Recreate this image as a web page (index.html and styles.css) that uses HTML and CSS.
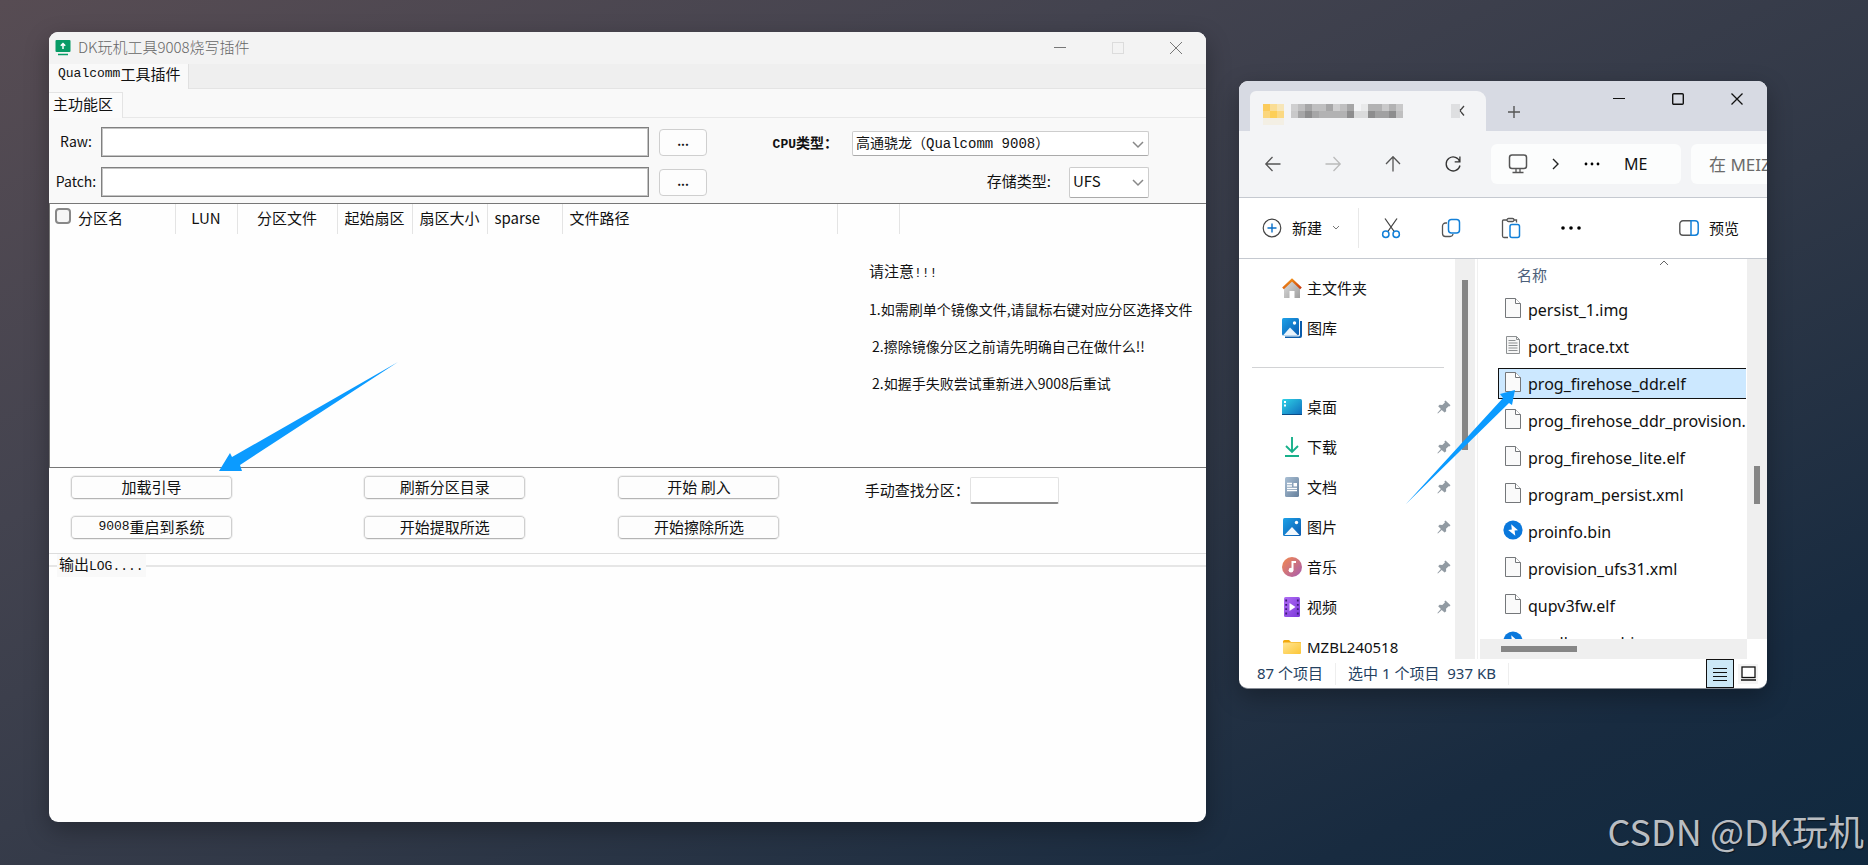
FILE: index.html
```html
<!DOCTYPE html>
<html lang="zh-CN">
<head>
<meta charset="utf-8">
<title>DK玩机工具9008烧写插件</title>
<link rel="stylesheet" href="styles.css">
</head>
<body>
<svg class="defs" width="0" height="0" aria-hidden="true">
  <defs>
    <linearGradient id="g-blue" x1="0" y1="0" x2="1" y2="1"><stop offset="0" stop-color="#1ea2e8"/><stop offset="1" stop-color="#0a5ab0"/></linearGradient>
    <linearGradient id="g-cyan" x1="0" y1="0" x2="1" y2="1"><stop offset="0" stop-color="#2fd3e6"/><stop offset="1" stop-color="#0f6cbd"/></linearGradient>
    <linearGradient id="g-roof" x1="0" y1="0" x2="1" y2="1"><stop offset="0" stop-color="#f9a01b"/><stop offset="1" stop-color="#c9380c"/></linearGradient>
    <linearGradient id="g-wall" x1="0" y1="0" x2="1" y2="1"><stop offset="0" stop-color="#dedede"/><stop offset="1" stop-color="#9f9f9f"/></linearGradient>
    <linearGradient id="g-doc" x1="0" y1="0" x2="1" y2="1"><stop offset="0" stop-color="#a9bfd4"/><stop offset="1" stop-color="#66809c"/></linearGradient>
    <linearGradient id="g-music" x1="0" y1="0" x2="1" y2="1"><stop offset="0" stop-color="#f58a4b"/><stop offset="1" stop-color="#a65bb2"/></linearGradient>
    <linearGradient id="g-video" x1="0" y1="0" x2="1" y2="1"><stop offset="0" stop-color="#b06df5"/><stop offset="1" stop-color="#7a37d8"/></linearGradient>
    <linearGradient id="g-folder" x1="0" y1="0" x2="1" y2="1"><stop offset="0" stop-color="#ffe594"/><stop offset="1" stop-color="#fcc636"/></linearGradient>
    <symbol id="pin" viewBox="0 0 14 14"><path d="M8.5.5 13.5 5.2 12.3 6.4 11.6 6.2 9 8.8 9.2 11.3 7.6 12.6 4.7 9.9.9 13.5.4 13 3.9 9.1 1.2 6.3 2.6 4.8 5.3 5 7.9 2.4 7.4 1.5Z" fill="#929ba3"/></symbol>
    <symbol id="file" viewBox="0 0 16 20"><path d="M.5.5h10l5 5v14H.5Z" fill="#fafafa" stroke="#74777a"/><path d="M10.5.5v5h5" fill="#fff" stroke="#74777a"/></symbol>
    <symbol id="txt" viewBox="0 0 16 20"><path d="M1.5 1.5h10l3 3v14h-13Z" fill="#f6f6f6" stroke="#8d9092"/><path d="M11.5 1.5v3h3" fill="none" stroke="#8d9092"/><path d="M3.5 5.5h7M3.5 8h9M3.5 10.5h9M3.5 13h9M3.5 15.5h9" stroke="#8d9092"/></symbol>
    <symbol id="bolt" viewBox="0 0 20 20"><circle cx="10" cy="10" r="9.6" fill="#0a78dc"/><path d="M8.2 4.2 15 10.2 11.6 10.6 12.3 15.8 5.2 10 8.8 9.4Z" fill="#fff"/></symbol>
  </defs>
</svg>

<main class="desktop">
  <section class="window tool">
    <header class="tool-title">
      <svg width="16" height="16" viewBox="0 0 16 16"><rect x="0.500" width="15" height="12" rx="1" fill="#079b66"/><path d="M8 9V4M5.800 5.800 8 3.500l2.200 2.300" fill="none" stroke="#fff" stroke-width="1.500"/><path d="M3 14.500h10" stroke="#079b66" stroke-width="1.500"/></svg>
      <h1>DK玩机工具9008烧写插件</h1>
      <div class="tool-controls">
        <button aria-label="最小化"><svg width="14" height="14"><path d="M1 6.500h12" stroke="#777"/></svg></button>
        <button aria-label="最大化" disabled><svg width="14" height="14"><rect x="1.500" y="1.500" width="11" height="11" fill="none" stroke="#dcdcdc"/></svg></button>
        <button aria-label="关闭"><svg width="14" height="14"><path d="m1 1 12 12M13 1 1 13" stroke="#777" fill="none"/></svg></button>
      </div>
    </header>
    <nav class="tabs tabs-outer"><button class="tab"><span class="mono">Qualcomm</span>工具插件</button></nav>
    <nav class="tabs tabs-inner"><button class="tab">主功能区</button></nav>

    <form class="setup">
      <div class="paths">
        <label for="raw">Raw:</label><input id="raw" type="text"><button type="button">...</button>
        <label for="patch">Patch:</label><input id="patch" type="text"><button type="button">...</button>
      </div>
      <div class="types">
        <div class="type-row"><label for="cpu" class="strong"><span class="mono">CPU</span>类型：</label>
          <span class="picker picker-cpu"><select id="cpu"><option>高通骁龙（Qualcomm 9008）</option></select><svg width="12" height="8"><path d="m1 1 5 5 5-5" fill="none" stroke="#888" stroke-width="1.500"/></svg></span></div>
        <div class="type-row storage"><label for="storage">存储类型:</label>
          <span class="picker picker-storage"><select id="storage"><option>UFS</option></select><svg width="12" height="8"><path d="m1 1 5 5 5-5" fill="none" stroke="#888" stroke-width="1.500"/></svg></span></div>
      </div>
    </form>

    <div class="partitions">
      <table>
        <colgroup><col class="c-name"><col class="c-lun"><col class="c-file"><col class="c-sector"><col class="c-sector"><col class="c-sector"><col class="c-path"><col class="c-lun"><col></colgroup>
        <thead><tr>
          <th class="left"><label><input type="checkbox">分区名</label></th><th>LUN</th><th>分区文件</th><th class="tight">起始扇区</th><th class="tight">扇区大小</th><th class="left">sparse</th><th class="left">文件路径</th><th></th><th></th>
        </tr></thead>
      </table>
      <div class="notes">
        <p class="notes-head">请注意<span class="mono">!!!</span></p>
        <p>1.如需刷单个镜像文件,请鼠标右键对应分区选择文件</p>
        <p class="indent">2.擦除镜像分区之前请先明确自己在做什么!!</p>
        <p class="indent">2.如握手失败尝试重新进入9008后重试</p>
      </div>
    </div>

    <div class="actions">
      <button>加载引导</button><button>刷新分区目录</button><button>开始 刷入</button>
      <div class="search"><label for="find">手动查找分区：</label><input id="find" type="text"></div>
      <button><span class="mono">9008</span>重启到系统</button><button>开始提取所选</button><button>开始擦除所选</button>
    </div>

    <fieldset class="log"><legend>输出<span class="mono">LOG....</span></legend></fieldset>
  </section>

  <section class="window explorer">
    <header class="ex-title">
      <div class="ex-tab">
        <svg class="mosaic" width="155" height="21" shape-rendering="crispEdges">
          <path fill="#fbcb5c" d="M0 0h7v7H0z"/><path fill="#fadd94" d="M7 0h7v7H7z"/><path fill="#f7e6b8" d="M14 0h7v7h-7z"/>
          <path fill="#fbd67c" d="M0 7h7v7H0z"/><path fill="#fdcf57" d="M7 7h7v7H7z"/><path fill="#fbd983" d="M14 7h7v7h-7z"/><path fill="#f3efe4" d="M0 14h21v7H0z"/>
          <path fill="#cfcfd0" d="M28 0h7v7h-7zM70 0h7v7h-7z"/><path fill="#bfbfc0" d="M28 7h14V0h-7v7zM49 0h14v7H49zM77 0h7v7h-7zM70 7h7v7h-7z"/>
          <path fill="#a6a6a7" d="M42 0h7v7h-7zM63 0h7v7h-7zM84 0h7v7h-7zM35 7h7v7h-7zM49 7h7v7h-7z"/>
          <path fill="#b2b2b3" d="M56 7h7v7h-7zM63 7h14v7H63zM77 7h7v7h-7zM105 0h14v7h-14zM126 0h7v7h-7z"/><path fill="#c9c9ca" d="M28 7h7v7h-7zM119 0h7v7h-7zM133 0h7v7h-7z"/>
          <path fill="#8d8d8e" d="M42 7h7v7h-7zM84 7h7v7h-7zM105 7h7v7h-7zM126 7h7v7h-7z"/><path fill="#e9eaeb" d="M98 0h7v7h-7z"/><path fill="#dadbdc" d="M91 7h14v7H91z"/><path fill="#a1a1a2" d="M112 7h14v7h-14z"/><path fill="#bfbfc0" d="M133 7h7v7h-7z"/>
        </svg>
        <button class="tab-close" aria-label="关闭标签页"><svg width="15" height="16"><path d="M0 1h9v14H0z" fill="#dedfe1"/><path d="m13 3-3 3.500M10 9l3 3.500M9.500 6v3" fill="none" stroke="#444" stroke-width="1.300"/></svg></button>
      </div>
      <button class="tab-add" aria-label="新建标签页"><svg width="14" height="14"><path d="M1 7h12M7 1v12" stroke="#555" stroke-width="1.400"/></svg></button>
      <div class="ex-controls">
        <button aria-label="最小化"><svg width="14" height="14"><path d="M1 6.500h12" stroke="#111"/></svg></button>
        <button aria-label="最大化"><svg width="14" height="14"><rect x="1.700" y="1.700" width="10.600" height="10.600" rx="1" fill="none" stroke="#111" stroke-width="1.400"/></svg></button>
        <button aria-label="关闭"><svg width="14" height="14"><path d="m1.500 1.500 11 11M12.500 1.500l-11 11" stroke="#111" stroke-width="1.300"/></svg></button>
      </div>
    </header>
    <div class="ex-nav">
      <button aria-label="后退"><svg width="18" height="18"><path d="M16.500 9H2M8.500 2 1.800 9l6.700 7" fill="none" stroke="#555" stroke-width="1.300"/></svg></button>
      <button aria-label="前进" disabled><svg width="18" height="18"><path d="M1.500 9H16M9.500 2l6.700 7-6.700 7" fill="none" stroke="#bbb" stroke-width="1.300"/></svg></button>
      <button aria-label="向上"><svg width="18" height="18"><path d="M9 16.500V2M2 9l7-7.200L16 9" fill="none" stroke="#555" stroke-width="1.300"/></svg></button>
      <button aria-label="刷新"><svg width="18" height="18"><path d="M15.900 7A7 7 0 1 0 16 10.500M15.900 1.500v5.300h-5.200" fill="none" stroke="#333" stroke-width="1.300"/></svg></button>
      <div class="address">
        <svg width="20" height="20"><rect x="1.500" y="1" width="17" height="13.500" rx="2.500" fill="none" stroke="#555" stroke-width="1.500"/><path d="M8 15v3M12 15v3M4.500 18.500h11" stroke="#555" stroke-width="1.300"/></svg>
        <svg width="8" height="12"><path d="m1 1 5 5-5 5" fill="none" stroke="#222" stroke-width="1.400"/></svg>
        <svg width="16" height="4"><circle cx="2" cy="2" r="1.400"/><circle cx="8" cy="2" r="1.400"/><circle cx="14" cy="2" r="1.400"/></svg>
        <span>ME</span>
      </div>
      <input class="ex-search" type="search" placeholder="在 MEIZ" aria-label="搜索">
    </div>
    <div class="ex-tools">
      <button class="new"><svg width="20" height="20"><circle cx="10" cy="10" r="8.800" fill="none" stroke="#444" stroke-width="1.200"/><path d="M5.500 10h9M10 5.500v9" stroke="#0a6fc8" stroke-width="1.400"/></svg>新建<svg width="8" height="6"><path d="m1 1 3 3 3-3" fill="none" stroke="#777"/></svg></button>
      <button class="tool-btn" aria-label="剪切"><svg width="20" height="22"><path d="M4 1.500 13.500 15M16 1.500 6.500 15" stroke="#444" stroke-width="1.300"/><circle cx="4.800" cy="17.300" r="3.200" fill="none" stroke="#1380d8" stroke-width="1.500"/><circle cx="15.200" cy="17.300" r="3.200" fill="none" stroke="#1380d8" stroke-width="1.500"/></svg></button>
      <button class="tool-btn" aria-label="复制"><svg width="20" height="20"><path d="M6 5H4.500a3 3 0 0 0-3 3v7.500a3 3 0 0 0 3 3h4.500a3 3 0 0 0 3-2.500" fill="none" stroke="#555" stroke-width="1.300"/><rect x="7.500" y="1.500" width="11" height="13.500" rx="3" fill="#fff" stroke="#1380d8" stroke-width="1.500"/></svg></button>
      <button class="tool-btn" aria-label="粘贴"><svg width="20" height="22"><path d="M6 3H2.500Q1.500 3 1.500 4v15q0 1.500 1.500 1.500h4M12 3h3.500v2.500" fill="none" stroke="#555" stroke-width="1.300"/><rect x="6" y="1.500" width="7" height="3" rx="1.500" fill="#fff" stroke="#555" stroke-width="1.300"/><rect x="9" y="7.500" width="9.500" height="13" rx="2" fill="#fff" stroke="#1380d8" stroke-width="1.500"/></svg></button>
      <button class="tool-btn" aria-label="更多"><svg width="20" height="6"><circle cx="2" cy="3" r="1.800"/><circle cx="10" cy="3" r="1.800"/><circle cx="18" cy="3" r="1.800"/></svg></button>
      <button class="preview"><svg width="20" height="16"><path d="M12 .8H4A3.200 3.200 0 0 0 .8 4v8A3.200 3.200 0 0 0 4 15.200h8" fill="none" stroke="#555" stroke-width="1.400"/><path d="M12 .8h4A3.200 3.200 0 0 1 19.200 4v8a3.200 3.200 0 0 1-3.200 3.200h-4Z" fill="none" stroke="#1380d8" stroke-width="1.500"/></svg>预览</button>
    </div>
    <div class="ex-body">
      <ul class="places">
        <li><svg width="20" height="20"><path d="M2 8.500 10 2l8 6.500V20h-5.500v-7h-5v7H2Z" fill="url(#g-wall)"/><path d="M1 10.300 10 1.800l9 8.500" fill="none" stroke="url(#g-roof)" stroke-width="2.400"/></svg>主文件夹</li>
        <li><svg width="20" height="20"><path d="M4 3h16v15a2 2 0 0 1-2 2H3v-3Z" fill="#0b5cab"/><rect width="18" height="18.500" rx="1.500" fill="#fff"/><rect width="17" height="17.500" rx="1.500" fill="url(#g-blue)"/><path d="m1 17.500 7-8 8 8Z" fill="#eaf4fc"/><circle cx="12.500" cy="5" r="1.700" fill="#fff"/></svg>图库</li>
        <li class="rule" role="separator"></li>
        <li><svg width="20" height="16"><rect width="20" height="16" rx="1.500" fill="url(#g-cyan)"/><path d="M0 15h20v1H0z" fill="#0b4b86"/><path d="M2 2h2v2H2zM2 5.500h2v2H2z" fill="#fff"/></svg>桌面<svg class="pin"><use href="#pin"/></svg></li>
        <li><svg width="20" height="20"><path d="M10 0v14.500M4 9l6 6 6-6M3 19h14" fill="none" stroke="#17b08a" stroke-width="1.900"/></svg>下载<svg class="pin"><use href="#pin"/></svg></li>
        <li><svg width="20" height="20"><rect x="3" width="14" height="20" rx="1.500" fill="url(#g-doc)"/><path d="M5 6.500h5M5 9h5M5 11.500h10M5 13.700h10" stroke="#fff" stroke-width="1.300"/><path d="M11.500 6h3.500v3.500h-3.500z" fill="#fff"/></svg>文档<svg class="pin"><use href="#pin"/></svg></li>
        <li><svg width="20" height="18"><rect x="1" width="18" height="18" rx="1.500" fill="url(#g-blue)"/><path d="m2.500 17 7.500-8 7.500 8Z" fill="#f2f8fd"/><circle cx="14.500" cy="4.500" r="1.700" fill="#fff"/></svg>图片<svg class="pin"><use href="#pin"/></svg></li>
        <li><svg width="20" height="20"><circle cx="10" cy="10" r="10" fill="url(#g-music)"/><path d="M10.500 4v9M10.500 5h3.500" stroke="#fff" stroke-width="2" fill="none"/><circle cx="9" cy="13.200" r="2.400" fill="#fff"/></svg>音乐<svg class="pin"><use href="#pin"/></svg></li>
        <li><svg width="20" height="20"><rect x="2" width="16" height="20" rx="1.500" fill="url(#g-video)"/><path d="M3.300 3.500h1.800M3.300 7.800h1.800M3.300 12.200h1.800M3.300 16.500h1.800M14.900 3.500h1.800M14.900 7.800h1.800M14.900 12.200h1.800M14.900 16.500h1.800" stroke="#3d1a78" stroke-width="1.800"/><path d="M7.500 6v8l6-4Z" fill="#fff"/></svg>视频<svg class="pin"><use href="#pin"/></svg></li>
        <li><svg width="20" height="16"><path d="M1 2.500A1.500 1.500 0 0 1 2.500 1H7l2 2h9a1 1 0 0 1 1 1v3H1Z" fill="#f2a90c"/><rect x="1" y="3.500" width="18" height="11.500" rx="1" fill="url(#g-folder)"/></svg>MZBL240518</li>
      </ul>
      <div class="vscroll places-scroll"><span></span></div>
      <div class="divider"></div>
      <div class="files">
        <div class="files-head">名称<svg width="10" height="6"><path d="m1 5 4-4 4 4" fill="none" stroke="#666"/></svg></div>
        <ul>
          <li><svg><use href="#file"/></svg>persist_1.img</li>
          <li><svg><use href="#txt"/></svg>port_trace.txt</li>
          <li class="selected"><svg><use href="#file"/></svg>prog_firehose_ddr.elf</li>
          <li><svg><use href="#file"/></svg>prog_firehose_ddr_provision.elf</li>
          <li><svg><use href="#file"/></svg>prog_firehose_lite.elf</li>
          <li><svg><use href="#file"/></svg>program_persist.xml</li>
          <li><svg class="round"><use href="#bolt"/></svg>proinfo.bin</li>
          <li><svg><use href="#file"/></svg>provision_ufs31.xml</li>
          <li><svg><use href="#file"/></svg>qupv3fw.elf</li>
          <li><svg class="round"><use href="#bolt"/></svg>smallnvram.bin</li>
        </ul>
      </div>
      <div class="vscroll files-scroll"><span></span></div>
      <div class="hscroll"><span></span></div>
    </div>
    <footer class="ex-status">
      <span class="count">87 个项目</span><span class="picked">选中 1 个项目&nbsp; 937 KB</span>
      <button class="view active" aria-label="详细信息"><svg width="14" height="14"><path d="M0 1.500h14M0 5.500h14M0 9.500h14M0 13.500h14" stroke="#111"/></svg></button>
      <button class="view" aria-label="大图标"><svg width="15" height="15"><rect x="1" y="1" width="13" height="10.500" fill="#fff" stroke="#111" stroke-width="1.300"/><path d="M0 14h15" stroke="#111" stroke-width="1.300"/></svg></button>
    </footer>
  </section>

  <svg class="arrow arrow-load" width="180" height="110"><path d="M0 109 11 91l2 4L179 0 21 103l2 6Z" fill="#0b9bff"/></svg>
  <svg class="arrow arrow-file" width="110" height="115"><path d="M109 0 106 15l-3-2L0 114 97 8l-3-4Z" fill="#0b9bff"/></svg>
  <p class="credit">CSDN @DK玩机</p>
</main>
</body>
</html>
```
FILE: styles.css
```css
* { box-sizing: border-box; }

body {
  margin: 0;
  font: 15px/20px "Noto Sans CJK SC", sans-serif;
  color: #111;
}

button, input, select { font: inherit; color: inherit; margin: 0; }
button { padding: 0; border: 0; background: none; display: flex; align-items: center; justify-content: center; }
svg { flex: none; display: block; }
ul { list-style: none; margin: 0; padding: 0; }
p { margin: 0; }

.defs { position: absolute; }
.mono { font-family: "Liberation Mono", "Noto Sans CJK SC", monospace; font-size: 13px; line-height: 16px; }

.desktop {
  position: relative;
  min-height: 100vh;
  padding: 32px 101px 43px 49px;
  display: grid;
  grid-template-columns: minmax(0, 1fr) 528px;
  gap: 33px;
  align-items: start;
  overflow: hidden;
  background: linear-gradient(155deg, #574c53 0%, #43434f 30%, #303847 58%, #182b40 85%, #10293f 100%);
}

.window { border-radius: 9px; overflow: hidden; box-shadow: 0 8px 24px rgba(0, 0, 0, .3); }

/* flashing tool */
.tool { background: #fefefe; }
.tool-title { display: flex; align-items: center; height: 32px; padding-left: 6px; background: #f3f3f3; }
.tool-title h1 { margin: 0 auto 2px 7px; font-size: 15px; font-weight: 300; color: #666; }
.tool-controls { display: flex; padding-right: 1px; }
.tool-controls button { width: 58px; height: 32px; }

.tabs { display: flex; }
.tabs-outer { height: 25px; background: #efefef; border-bottom: 1px solid #e4e4e4; }
.tabs-outer .tab { height: 25px; padding: 0 8px 5px 9px; background: #f9f9f9; border-right: 1px solid #e0e0e0; }
.tabs-inner { height: 29px; padding-top: 3px; background: #f9f9f9; border-bottom: 1px solid #e8e8e8; }
.tabs-inner .tab { height: 26px; padding: 0 9px 4px 4px; background: #fbfbfb; border: 1px solid #e4e4e4; border-width: 1px 1px 0 0; }

.setup { display: flex; justify-content: space-between; padding: 9px 57px 6px 0; background: #f9f9f9; }
.paths {
  flex: 0 1 658px;
  display: grid;
  grid-template-columns: 52px minmax(0, 1fr) 58px;
  grid-auto-rows: 30px;
  row-gap: 10px;
  align-items: center;
}
.paths label { padding: 0 0 3px 2px; text-align: center; white-space: nowrap; font-size: 14px; }
.paths input { width: 100%; height: 30px; border: 1px solid #808080; outline: 1px solid #c4c4c4; outline-offset: -2px; background: #fff; }
.paths button { width: 48px; height: 27px; margin-left: 10px; padding-bottom: 2px; border: 1px solid #cfcfcf; border-radius: 4px; background: #fdfdfd; font-weight: 700; font-size: 12px; }
.types { display: grid; grid-auto-rows: 30px; gap: 10px; }
.type-row { display: flex; align-items: center; justify-content: flex-end; gap: 14px; padding-top: 3px; }
.type-row label { padding-bottom: 3px; }
.storage { gap: 18px; padding-top: 0; }
.strong { font-weight: 700; font-size: 14px; }
.picker { position: relative; display: flex; }
.picker select { appearance: none; width: 100%; border: 1px solid #cdcdcd; border-bottom-color: #aaa; border-radius: 2px; background: #fff; padding: 0 3px; }
.picker svg { position: absolute; right: 5px; top: calc(50% - 3px); }
.picker-cpu { width: 297px; }
.picker-cpu select { height: 25px; font-family: "Liberation Mono", "Noto Sans CJK SC", monospace; font-size: 14px; }
.picker-storage { width: 80px; }
.picker-storage select { height: 31px; padding-bottom: 2px; }

.partitions { height: 265px; border: solid #777; border-width: 1px 0 1px 1px; background: #fefefe; }
.partitions table { width: 100%; table-layout: fixed; border-collapse: collapse; }
.c-name { width: 125px; }
.c-lun { width: 62px; }
.c-file { width: 100px; }
.c-sector { width: 75px; }
.c-path { width: 275px; }
.partitions th { height: 30px; padding: 0 7px 3px; font-weight: 400; border-right: 1px solid #e4e4e4; white-space: nowrap; }
.partitions th:last-child { border-right: 0; }
.partitions .tight { padding: 0 4px 3px; }
.partitions .left { text-align: left; }
.partitions th:first-child { padding-left: 5px; }
.partitions th label { display: flex; align-items: center; gap: 7px; }
.partitions input { appearance: none; width: 16px; height: 16px; margin-bottom: 3px; border: 2px solid #888; border-radius: 4px; background: #f6f6f6; }
.notes { width: 337px; margin-left: auto; padding-top: 27px; display: grid; gap: 17px; font-size: 14px; white-space: nowrap; }
.notes-head { font-size: 15px; }
.indent { padding-left: 3px; }

.actions {
  display: grid;
  grid-template-columns: 293fr 254fr 246fr 341fr;
  grid-auto-rows: 23px;
  row-gap: 17px;
  padding: 8px 0 14px 22px;
  border-bottom: 1px solid #ddd;
}
.actions > button { width: 161px; padding-bottom: 2px; border: 1px solid #cfcfcf; border-bottom-color: #b4b4b4; border-radius: 4px; background: #fdfdfd; outline: 1px solid #f0f0f0; white-space: pre; }
.search { display: flex; height: 28px; align-items: center; white-space: nowrap; }
.search input { width: 89px; height: 27px; border: 1px solid #e2e2e2; border-bottom: 2px solid #8a8a8a; border-radius: 2px; background: #fff; }

.log { min-height: 268px; margin: 0; padding: 0; border: 0; border-top: 2px solid #e6e6e6; }
.log legend { margin-left: 8px; padding: 0 2px 2px; line-height: 20px; background: #f9f9f9; }

/* file explorer */
.explorer { margin-top: 49px; background: #fff; border: 1px solid #888d96; border-width: 0 0 1px; font-family: "Noto Sans", "Noto Sans CJK SC", sans-serif; }
.ex-title { display: flex; height: 50px; background: #d7dae3; }
.ex-tab { display: flex; align-items: center; width: 236px; height: 40px; margin: 10px 0 0 11px; padding: 0 20px 0 13px; border-radius: 6px 9px 0 0; background: #f3f4f6; }
.mosaic { margin-top: 6px; }
.tab-close { margin-left: auto; }
.tab-add { width: 56px; height: 40px; margin-top: 11px; }
.ex-controls { display: flex; margin-left: auto; padding-right: 1px; }
.ex-controls button { width: 59px; height: 36px; }

.ex-nav { display: flex; align-items: center; height: 67px; padding-left: 4px; background: #f3f4f6; border-bottom: 1px solid #c5c9d0; font-size: 16px; }
.ex-nav button { flex: none; width: 60px; height: 40px; }
.address { flex: none; display: flex; align-items: center; width: 190px; height: 40px; margin: 0 10px 0 8px; padding-left: 17px; gap: 24px; border-radius: 6px; background: #fcfdfd; }
.ex-search { flex: none; width: 110px; height: 40px; padding: 0 0 0 18px; border: 0; border-radius: 6px; background: #fcfdfd; font-size: 17px; }
.ex-search::placeholder { color: #6b6b6b; opacity: 1; }

.ex-tools { display: flex; align-items: center; height: 61px; padding-left: 14px; border-bottom: 1px solid #c5c9d0; }
.new { gap: 10px; width: 106px; height: 40px; margin-right: 2px; padding-right: 9px; border-right: 1px solid #e8e8e8; }
.tool-btn { width: 60px; height: 40px; }
.preview { gap: 10px; margin: 0 28px 0 auto; }

.ex-body { display: grid; grid-template-columns: 216px 20px 5px minmax(0, 1fr) 20px; grid-template-rows: 380px 20px; }
.places { grid-row: span 2; padding-top: 9px; overflow: hidden; }
.places li { display: flex; align-items: center; gap: 5px; height: 40px; padding: 0 4px 0 43px; }
.places .rule { height: 1px; margin: 19px 11px 19px 13px; padding: 0; background: #d2d3d5; }
.pin { width: 14px; height: 14px; margin-left: auto; }
.vscroll { display: flex; justify-content: center; background: #efefef; }
.vscroll span { width: 6px; background: #868686; }
.places-scroll { grid-row: span 2; }
.places-scroll span { height: 170px; margin-top: 21px; }
.divider { grid-row: span 2; width: 1px; margin-left: 2px; background: #f0f0f0; }
.files { overflow: hidden; }
.files-head { display: flex; align-items: center; justify-content: space-between; height: 35px; padding: 0 78px 3px 37px; color: #4c607a; }
.files-head svg { align-self: flex-start; margin-top: 1px; }
.files li { display: flex; align-items: center; gap: 7px; height: 31px; margin: 0 1px 6px 18px; padding-left: 6px; border: 1px solid transparent; border-right: 0; white-space: nowrap; overflow: hidden; font-size: 16px; }
.files li svg { width: 16px; height: 20px; margin-bottom: 3px; }
.files li .round { width: 20px; margin: 0 -2px 3px; }
.files .selected { border-color: #111; background: #cce8ff; }
.files-scroll span { height: 38px; margin-top: 207px; }
.hscroll { grid-column: 4; display: flex; align-items: center; background: #efefef; }
.hscroll span { width: 76px; height: 6px; margin-left: 21px; background: #868686; }

.ex-status { display: flex; align-items: center; height: 29px; padding-right: 9px; color: #24415f; }
.count { padding: 0 12px 2px 18px; border-right: 1px solid #eee; }
.picked { margin-right: auto; padding: 0 12px 2px; border-right: 1px solid #eee; }
.view { width: 20px; height: 20px; background: #f5f5f5; }
.view.active { width: 28px; height: 29px; margin-right: 4px; border: 1px solid #111; background: #cce8f6; }

/* annotations over the desktop */
.arrow { position: absolute; pointer-events: none; }
.arrow-load { left: 219px; top: 362px; }
.arrow-file { left: 1406px; top: 390px; }
.credit { position: absolute; right: 4px; bottom: 13px; font-size: 36px; line-height: 44px; font-weight: 400; color: #b9bdc2; text-shadow: 1px 1px 1px rgba(0, 0, 0, .5); }
```
